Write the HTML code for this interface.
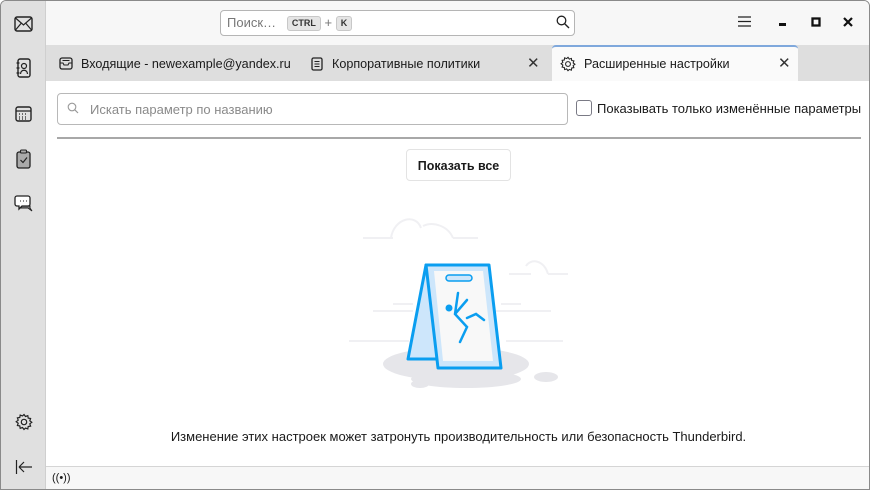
<!DOCTYPE html>
<html><head><meta charset="utf-8"><style>
*{box-sizing:border-box;margin:0;padding:0}
body{width:870px;height:490px;overflow:hidden;background:#fff;font-family:"Liberation Sans","DejaVu Sans",sans-serif;font-size:13px;color:#1a1a1a;position:relative}
.win{position:absolute;left:0;top:0;width:870px;height:490px;border:1px solid #8a8a8a;border-radius:6px 6px 0 0;overflow:hidden}
.side{position:absolute;left:0;top:0;width:45px;height:490px;background:#e0e0e0;border-right:1px solid #cfcfcf}
.title{position:absolute;left:45px;top:0;right:0;height:44px;background:#f7f7f7}
.tabs{position:absolute;left:45px;top:44px;right:0;height:36px;background:#dedede}
.search{position:absolute;left:174px;top:9px;width:355px;height:26px;border:1px solid #b5b5b5;border-radius:4px;background:#fff;font-size:13px;color:#777;padding:4px 6px}
.kbd{display:inline-block;background:#e5e5e5;border:1px solid #c8c8c8;border-radius:3px;font-size:9px;font-weight:bold;color:#333;padding:0 4px;line-height:13px;vertical-align:1px}
.tab{position:absolute;top:0;height:36px;font-size:12.6px;padding-top:12px;color:#1a1a1a}
.act{background:#fafafa;border-top:2px solid #7fa8dc;border-radius:4px 4px 0 0}
.x{position:absolute;font-size:15px;color:#333}
svg{position:absolute}
.inp{position:absolute;left:56px;top:92px;width:511px;height:32px;border:1px solid #b8b8b8;border-radius:4px;font-size:13px;color:#8a8a8a;padding:8px 0 0 32px}
.btn{position:absolute;left:405px;top:148px;width:105px;height:32px;border:1px solid #e3e3e3;border-radius:4px;font-size:12.5px;font-weight:bold;text-align:center;padding-top:9px}
.status{position:absolute;left:45px;top:465px;right:0;height:25px;background:#f7f7f7;border-top:1px solid #d5d5d5;font-size:11px;padding:5px 6px}
</style></head><body><div class="win">
<div class="side">
 <svg style="left:13px;top:15px" width="19" height="16" viewBox="0 0 19 16"><rect x="1" y="1" width="17" height="14" rx="2" fill="none" stroke="#222" stroke-width="1.4"/><path d="M1.5 2 L9.5 9 L17.5 2 M1.5 14 L7 7.5 M17.5 14 L12 7.5" fill="none" stroke="#222" stroke-width="1.2"/></svg>
 <svg style="left:15px;top:57px" width="15" height="20" viewBox="0 0 15 20"><rect x="2" y="1" width="12" height="18" rx="2" fill="none" stroke="#222" stroke-width="1.4"/><circle cx="8" cy="8" r="2.5" fill="none" stroke="#222" stroke-width="1.2"/><path d="M4.5 16 C4.5 11 11.5 11 11.5 16 M0.5 5h3M0.5 10h3M0.5 15h3" fill="none" stroke="#222" stroke-width="1.2"/></svg>
 <svg style="left:14px;top:104px" width="17" height="17" viewBox="0 0 17 17"><rect x="1" y="2" width="15" height="14" rx="2" fill="none" stroke="#222" stroke-width="1.4"/><path d="M1 6h15" stroke="#222" stroke-width="1.3"/><path d="M4 9h1M7 9h1M10 9h1M4 12h1M7 12h1M10 12h1M4 14h1M7 14h1M10 14h1" stroke="#222" stroke-width="1.2"/></svg>
 <svg style="left:15px;top:148px" width="15" height="20" viewBox="0 0 15 20"><rect x="1" y="3" width="13" height="16" rx="2" fill="#aaa" stroke="#222" stroke-width="1.3"/><rect x="4.5" y="1" width="6" height="3" rx="1" fill="#aaa" stroke="#222" stroke-width="1.1"/><path d="M4.5 11 L7 13.5 L11 8.5" fill="none" stroke="#222" stroke-width="1.2"/></svg>
 <svg style="left:13px;top:193px" width="20" height="19" viewBox="0 0 20 19"><path d="M7 12 L16 12 L16 14 L18 17 L14 14 L7 14Z" fill="#888" stroke="#222" stroke-width="1"/><path d="M3 2h11a2 2 0 0 1 2 2v6a2 2 0 0 1-2 2h-6l-3 3v-3h-2a2 2 0 0 1-2-2v-6a2 2 0 0 1 2-2z" fill="#fff" stroke="#222" stroke-width="1.3"/><path d="M6 7h1M9 7h1M12 7h1" stroke="#222"/></svg>
 <svg style="left:14px;top:412px" width="18" height="18" viewBox="0 0 18 18"><path d="M9 1.5l1.5 2 2.3-.8.4 2.4 2.4.4-.8 2.3 2 1.5-2 1.5.8 2.3-2.4.4-.4 2.4-2.3-.8L9 16.5l-1.5-2-2.3.8-.4-2.4-2.4-.4.8-2.3-2-1.5 2-1.5-.8-2.3 2.4-.4.4-2.4 2.3.8z" fill="none" stroke="#222" stroke-width="1.2"/><circle cx="9" cy="9" r="2.7" fill="none" stroke="#222" stroke-width="1.2"/></svg>
 <svg style="left:14px;top:458px" width="18" height="16" viewBox="0 0 18 16"><path d="M1.5 1v14M4 8h13M4 8l5-5M4 8l5 5" fill="none" stroke="#222" stroke-width="1.2"/></svg>
</div>
<div class="title">
 <div class="search">Поиск…&nbsp;&nbsp; <span class="kbd">CTRL</span> + <span class="kbd">K</span></div>
 <svg style="left:510px;top:14px" width="14" height="14" viewBox="0 0 14 14"><circle cx="5.5" cy="5.5" r="4.3" fill="none" stroke="#222" stroke-width="1.3"/><path d="M8.7 8.7L13 13" stroke="#222" stroke-width="1.4"/></svg>
 <svg style="left:692px;top:15px" width="13" height="11"><path d="M0 1h13M0 5.5h13M0 10h13" stroke="#222" stroke-width="1.2"/></svg>
 <svg style="left:732px;top:20px" width="10" height="6"><rect x="1" y="2" width="7" height="3" fill="#111"/></svg>
 <svg style="left:765px;top:16px" width="10" height="10"><rect x="1.5" y="1.5" width="7" height="7" fill="none" stroke="#111" stroke-width="2.3"/></svg>
 <svg style="left:797px;top:16px" width="10" height="10"><path d="M1 1l8 8M9 1l-8 8" stroke="#111" stroke-width="2.2"/></svg>
</div>
<div class="tabs">
 <svg style="left:13px;top:12px" width="14" height="13" viewBox="0 0 14 13"><rect x="1" y="1" width="12" height="11" rx="2" fill="none" stroke="#222" stroke-width="1.3"/><path d="M1 6h3l1 2h4l1-2h3M3.5 3.5h7" fill="none" stroke="#222" stroke-width="1.1"/></svg>
 <div class="tab" style="left:35px">Входящие - newexample@yandex.ru</div>
 <svg style="left:265px;top:12px" width="12" height="14" viewBox="0 0 12 14"><rect x="1" y="1" width="10" height="12" rx="1.5" fill="none" stroke="#222" stroke-width="1.3"/><path d="M3.5 4.5h5M3.5 7h5M3.5 9.5h5" stroke="#222" stroke-width="1.1"/></svg>
 <div class="tab" style="left:286px">Корпоративные политики</div>
 <div class="x" style="left:481px;top:9px">✕</div>
 <div class="tab act" style="left:506px;width:246px;padding-top:10px;padding-left:32px">Расширенные настройки</div>
 <svg style="left:514px;top:11px" width="16" height="16" viewBox="0 0 18 18"><path d="M9 1.5l1.5 2 2.3-.8.4 2.4 2.4.4-.8 2.3 2 1.5-2 1.5.8 2.3-2.4.4-.4 2.4-2.3-.8L9 16.5l-1.5-2-2.3.8-.4-2.4-2.4-.4.8-2.3-2-1.5 2-1.5-.8-2.3 2.4-.4.4-2.4 2.3.8z" fill="none" stroke="#222" stroke-width="1.2"/><circle cx="9" cy="9" r="2.7" fill="none" stroke="#222" stroke-width="1.2"/></svg>
 <div class="x" style="left:732px;top:9px">✕</div>
</div>
<div class="inp">Искать параметр по названию</div>
<svg style="left:66px;top:101px" width="12" height="12" viewBox="0 0 12 12"><circle cx="5" cy="5" r="3.8" fill="none" stroke="#999" stroke-width="1.1"/><path d="M7.8 7.8L11 11" stroke="#999" stroke-width="1.2"/></svg>
<div style="position:absolute;left:575px;top:99px;width:16px;height:16px;border:1.5px solid #7a7a85;border-radius:3px"></div>
<div style="position:absolute;left:596px;top:100px;font-size:13px">Показывать только изменённые параметры</div>
<div style="position:absolute;left:56px;top:136px;width:804px;height:2px;background:#a8a8a8"></div>
<div class="btn">Показать все</div>
<svg style="left:340px;top:200px" width="230" height="190" viewBox="0 0 230 190">
 <g stroke="#f0f0f3" stroke-width="2" fill="none">
  <path d="M22 37h30M50 37c3-20 25-25 30-10M82 25c10-5 25 0 30 12M112 37h25"/>
  <path d="M168 73h22M185 65c5-8 18-6 22 8M207 73h20"/>
  <path d="M32 110h40M155 110h55M52 103h20M160 103h20"/>
  <path d="M8 140h60M165 140h57"/>
 </g>
 <ellipse cx="115" cy="163" rx="73" ry="17" fill="#e6e6ea"/>
 <ellipse cx="125" cy="178" rx="55" ry="9" fill="#e6e6ea"/>
 <ellipse cx="205" cy="176" rx="12" ry="5" fill="#e6e6ea"/>
 <ellipse cx="79" cy="183" rx="9" ry="4" fill="#e6e6ea"/>
 <path d="M85 64 L67 158 L98 158 L95 64Z" fill="#cde6fb" stroke="#0a9ef0" stroke-width="3" stroke-linejoin="round"/>
 <path d="M85 64 L148 64 L160 167 L97 167Z" fill="#cde6fb" stroke="#0a9ef0" stroke-width="3" stroke-linejoin="round"/>
 <path d="M93 70 L142 70 L152 160 L102 160Z" fill="#f8f8f8"/>
 <rect x="105" y="74" width="26" height="6" rx="3" fill="#cde6fb" stroke="#0a9ef0" stroke-width="1.5"/>
 <g stroke="#0a9ef0" stroke-width="2.5" fill="none" stroke-linecap="round">
  <circle cx="108" cy="107" r="3.5" fill="#0a9ef0" stroke="none"/>
  <path d="M114 113 L117 92 M114 113 L126 99 M114 113 L126 126 L119 141 M126 117 L135 113 L143 119"/>
 </g>
</svg>
<div style="position:absolute;left:0;width:870px;text-align:center;top:428px;font-size:13px;padding-left:45px">Изменение этих настроек может затронуть производительность или безопасность Thunderbird.</div>
<div class="status">((•))</div>
</div></body></html>
